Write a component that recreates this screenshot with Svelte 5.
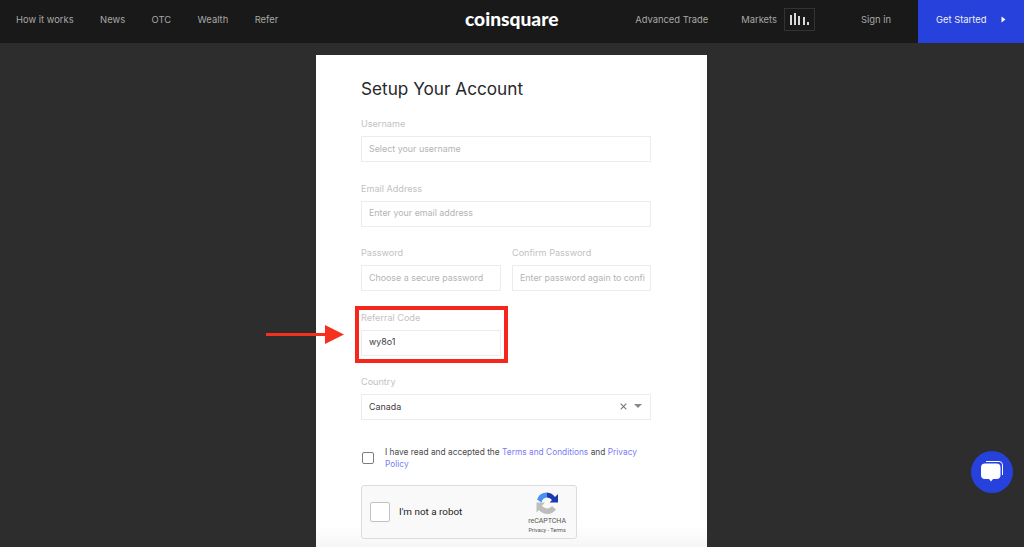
<script>
  const leftNav = ['How it works', 'News', 'OTC', 'Wealth', 'Refer'];
</script>

<div class="page">
  <header class="topbar">
    <nav class="left">
      {#each leftNav as item}<a href="#top">{item}</a>{/each}
    </nav>
    <div class="logo">coinsquare</div>
    <div class="right">
      <a class="adv" href="#top">Advanced Trade</a>
      <a class="mk" href="#top">Markets</a>
      <span class="chart">
        <svg width="19" height="12" viewBox="0 0 19 12" fill="#d8d8d8">
          <rect x="0" y="2" width="2" height="10" />
          <rect x="4" y="0" width="2" height="12" />
          <rect x="8" y="3" width="2" height="9" />
          <rect x="13" y="4" width="2" height="8" />
          <rect x="17" y="9" width="2" height="3" />
        </svg>
      </span>
      <a class="signin" href="#top">Sign in</a>
      <a class="cta" href="#top">
        <span>Get Started</span>
        <svg width="5" height="7" viewBox="0 0 5 7" fill="#fff"><path d="M0.500 0.500L4.500 3.500L0.500 6.500Z" /></svg>
      </a>
    </div>
  </header>

  <main class="main">
    <section class="card">
      <h1>Setup Your Account</h1>

      <div class="field">
        <span class="label">Username</span>
        <div class="input ph">Select your username</div>
      </div>
      <div class="field">
        <span class="label">Email Address</span>
        <div class="input ph">Enter your email address</div>
      </div>
      <div class="two">
        <div class="field">
          <span class="label">Password</span>
          <div class="input ph">Choose a secure password</div>
        </div>
        <div class="field">
          <span class="label">Confirm Password</span>
          <div class="input ph">Enter password again to confi</div>
        </div>
      </div>
      <div class="field referral">
        <span class="label">Referral Code</span>
        <div class="input val">wy8o1</div>
        <div class="redbox"></div>
        <svg class="arrow" width="80" height="24" viewBox="0 0 80 24" fill="#f5301f">
          <rect x="0" y="10" width="60" height="3" />
          <path d="M59 2L78 11.500L59 21Z" />
        </svg>
      </div>
      <div class="field">
        <span class="label">Country</span>
        <div class="input val select">
          <span class="grow">Canada</span>
          <svg width="7" height="7" viewBox="0 0 7 7" stroke="#777" stroke-width="1.100" fill="none"><path d="M0.700 0.700L6.300 6.300M6.300 0.700L0.700 6.300" /></svg>
          <svg width="8" height="4" viewBox="0 0 8 4" fill="#888"><path d="M0 0H8L4 4Z" /></svg>
        </div>
      </div>

      <div class="terms">
        <span class="check"></span>
        <p>I have read and accepted the <a href="#top">Terms and Conditions</a> and <a href="#top">Privacy Policy</a></p>
      </div>

      <div class="captcha">
        <span class="cbox"></span>
        <span class="robot">I'm not a robot</span>
        <div class="brand">
          <svg width="24" height="24" viewBox="0 0 24 24" fill="none">
            <path d="M12 1.500A10.500 10.500 0 0 0 2 8.500L6.500 11.500A6 6 0 0 1 12 6.500Z" fill="#4a90f2" />
            <path d="M12 1.500A10.500 10.500 0 0 1 20 6L23 3V11.500H14.500L17 9A6 6 0 0 0 12 6.500Z" fill="#1c3aa9" />
            <path d="M1.500 11.500H10L7 14.500A6 6 0 0 0 17 15L21 18.500A10.500 10.500 0 0 1 4 19L1.500 21.500Z" fill="#bdbdbd" />
          </svg>
          <span class="rc">reCAPTCHA</span>
          <span class="pt">Privacy - Terms</span>
        </div>
      </div>
    </section>
  </main>

  <button class="chat" aria-label="Open chat">
    <svg width="24" height="24" viewBox="0 0 24 24">
      <path d="M6 1.500H19Q22.500 1.500 22.500 5V15" fill="none" stroke="#fff" stroke-width="1" />
      <path d="M5 3.500H16.500Q20.500 3.500 20.500 7.500V15Q20.500 19 16.500 19H13L11 21.500L9 19H5Q1 19 1 15V7.500Q1 3.500 5 3.500Z" fill="#fff" />
    </svg>
  </button>
</div>

<style>
  :global(body) {
    margin: 0;
    background: #2d2d2d;
    font-family: Inter, "Liberation Sans", sans-serif;
  }
  a { text-decoration: none; color: inherit; }
  .page {
    position: relative;
    width: 1024px;
    height: 547px;
    overflow: hidden;
    background: #2d2d2d;
  }
  .topbar {
    height: 43px;
    box-sizing: border-box;
    padding-bottom: 5px;
    background: #191919;
    display: flex;
    align-items: center;
    position: relative;
    font-size: 9.400px;
    color: #a8a8a8;
  }
  .left {
    display: flex;
    gap: 26.500px;
    padding-left: 16px;
  }
  .logo {
    position: absolute;
    left: 465px;
    top: 7px;
    font-size: 19.200px;
    font-weight: 900;
    color: #fff;
    font-family: Lato, Inter, sans-serif;
    line-height: 24px;
  }
  .right {
    margin-left: auto;
    display: flex;
    align-items: center;
    height: 38px;
  }
  .mk { margin-left: 33px; }
  .chart {
    margin-left: 7px;
    width: 31px;
    height: 23px;
    border: 1px solid #333;
    box-sizing: border-box;
    display: flex;
    align-items: center;
    justify-content: center;
  }
  .signin { margin-left: 46px; }
  .cta {
    margin-left: 27px;
    width: 106px;
    height: 43px;
    align-self: flex-start;
    background: #2741dc;
    color: #f0f0f0;
    display: flex;
    align-items: center;
    box-sizing: border-box;
    padding: 0 0 5px 18px;
    gap: 15px;
  }
  .main {
    padding: 12px 0 0 316px;
    display: flex;
  }
  .card {
    width: 391px;
    height: 492px;
    background: linear-gradient(#fff 470px, #f6f6f6 100%);
    box-sizing: border-box;
    padding: 22px 56px 0 45px;
  }
  h1 {
    margin: 0 0 17px;
    font-size: 17.200px;
    line-height: 24px;
    font-weight: 400;
    color: #26282b;
  }
  .field {
    display: flex;
    flex-direction: column;
    margin-bottom: 20.500px;
  }
  .label {
    font-size: 9.100px;
    line-height: 12px;
    color: #c2c2c2;
    margin-bottom: 6px;
  }
  .input {
    height: 26px;
    border: 1px solid #ececec;
    box-sizing: border-box;
    display: flex;
    align-items: center;
    padding: 0 7px 1.500px;
    font-size: 8.900px;
    overflow: hidden;
    white-space: nowrap;
  }
  .ph { color: #b4b4b4; }
  .val { color: #3c3c3c; }
  .two {
    display: grid;
    grid-template-columns: 140px 139px;
    gap: 11px;
  }
  .referral { position: relative; width: 140px; }
  .redbox {
    position: absolute;
    left: -6px;
    top: -5.500px;
    width: 145px;
    height: 49px;
    border: 4px solid #f5271c;
    pointer-events: none;
  }
  .arrow {
    position: absolute;
    left: -95px;
    top: 11.500px;
  }
  .select { gap: 7px; padding-right: 8px; }
  .grow { flex: 1; }
  .terms {
    display: flex;
    gap: 11px;
    align-items: center;
    margin-top: 25.500px;
    margin-left: 1px;
  }
  .check {
    width: 10px;
    height: 10px;
    border: 1.500px solid #7d7d7d;
    border-radius: 2px;
    flex: none;
  }
  .terms p {
    margin: 0;
    font-size: 8.350px;
    line-height: 12.500px;
    color: #4a4a4a;
  }
  .terms a { color: #7a7df5; }
  .captcha {
    margin-top: 14px;
    width: 216px;
    height: 54px;
    box-sizing: border-box;
    background: #f9f9f9;
    border: 1px solid #dcdcdc;
    border-radius: 3px;
    display: flex;
    align-items: center;
    padding: 0 10px 0 8px;
  }
  .cbox {
    width: 20px;
    height: 20px;
    box-sizing: border-box;
    background: #fff;
    border: 1.500px solid #c1c1c1;
    border-radius: 2px;
  }
  .robot {
    margin-left: 9px;
    flex: 1;
    font-family: Roboto, sans-serif;
    font-size: 9.900px;
    color: #222;
  }
  .brand {
    display: flex;
    flex-direction: column;
    align-items: center;
    font-family: Roboto, sans-serif;
    color: #555;
    margin-top: 2px;
  }
  .rc { font-size: 7px; line-height: 9px; margin-top: 2px; }
  .pt { font-size: 5.500px; line-height: 8px; }
  .chat {
    position: absolute;
    left: 971px;
    top: 451px;
    width: 42px;
    height: 42px;
    padding: 0;
    border: 0;
    border-radius: 50%;
    background: #2741dc;
    display: flex;
    align-items: center;
    justify-content: center;
  }
</style>
